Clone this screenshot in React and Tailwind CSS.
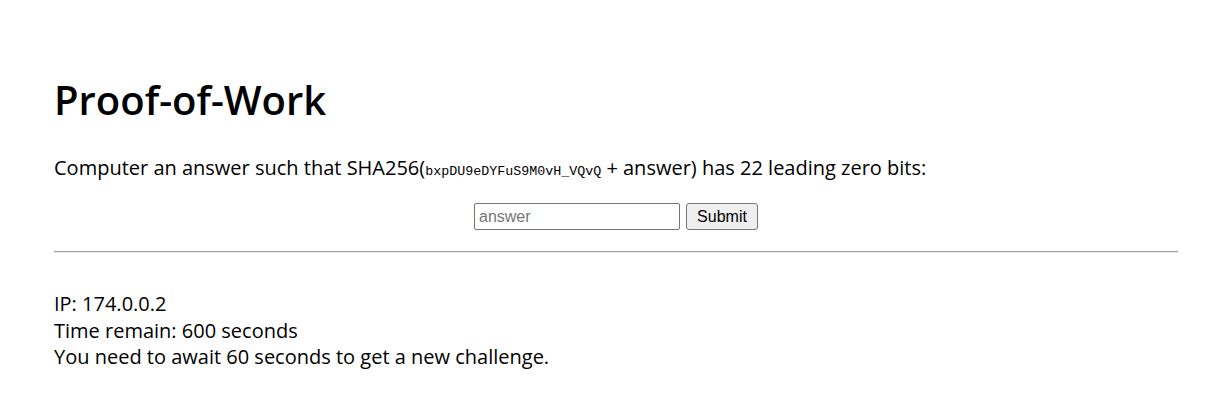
export default function App() {
  return (
    <div className="min-h-screen bg-white pl-[54px] pr-[41px] pt-[72px] text-black" style={{ fontFamily: '"Open Sans", sans-serif' }}>
      <h1 className="text-[40px] font-semibold leading-[56px]">Proof-of-Work</h1>

      <p className="mt-[26px] text-[20px] leading-[27px]">
        Computer an answer such that SHA256(
        <code className="text-[13.33px]" style={{ fontFamily: '"Liberation Mono", monospace' }}>bxpDU9eDYFuS9M0vH_VQvQ</code>
        {' '}+ answer) has 22 leading zero bits:
      </p>

      <form className="mt-[18px] flex justify-center gap-[6px]" onSubmit={(e) => e.preventDefault()}>
        <input
          type="text"
          placeholder="answer"
          className="h-[27px] w-[206px] border border-[#767676] rounded-[2px] px-[4px] text-[16px] placeholder:text-[#757575] outline-none"
          style={{ fontFamily: '"Liberation Sans", Arial, sans-serif' }}
        />
        <button
          type="submit"
          className="h-[27px] w-[72px] border border-[#767676] rounded-[3px] bg-[#efefef] text-[16px]"
          style={{ fontFamily: '"Liberation Sans", Arial, sans-serif' }}
        >
          Submit
        </button>
      </form>

      <hr className="mt-[21px] border-t border-b border-t-[#9a9a9a] border-b-[#eeeeee]" />

      <div className="mt-[38px] text-[20px] leading-[26.5px]">
        <div>IP: 174.0.0.2</div>
        <div>Time remain: 600 seconds</div>
        <div>You need to await 60 seconds to get a new challenge.</div>
      </div>
    </div>
  );
}
